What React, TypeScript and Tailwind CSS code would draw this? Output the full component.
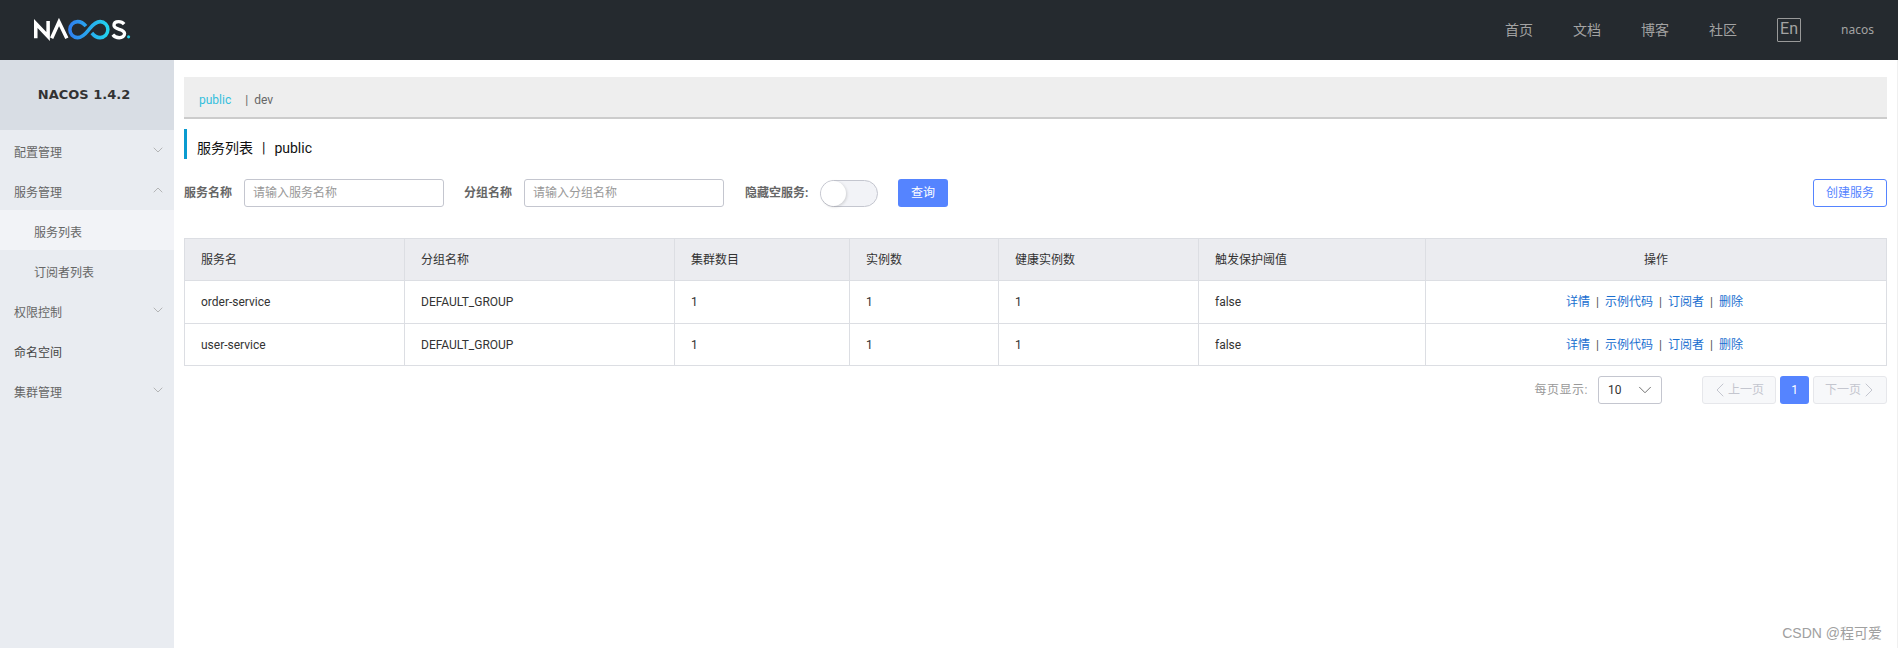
import React from "react";
import { ChevronDown, ChevronUp, ChevronLeft, ChevronRight } from "lucide-react";

const font = 'Roboto, "Noto Sans CJK SC", sans-serif';

function Logo() {
  return (
    <svg width="98" height="24" viewBox="0 0 100 24" preserveAspectRatio="none" className="block" aria-label="NACOS logo">
      <defs>
        <linearGradient id="inf" x1="0" x2="1" y1="0" y2="0">
          <stop offset="0" stopColor="#2f80f0" />
          <stop offset="1" stopColor="#22d3ee" />
        </linearGradient>
      </defs>
      <g fill="none" stroke="#fff" strokeWidth="3.6">
        <path d="M1.8 20.2V5.5L14.4 18.5V3" />
        <path d="M18 20.2L25.5 4L33.5 20.2" />
      </g>
      <path
        d="M53 8.2C50 4.5 47 3.6 44.5 3.6C40 3.6 36.6 7.2 36.6 11.6C36.6 16 40 19.6 44.5 19.6C50 19.6 54 14 56 11.6C58 9.2 62 3.6 67.5 3.6C72 3.6 75.4 7.2 75.4 11.6C75.4 16 72 19.6 67.5 19.6C65 19.6 62 18.7 59 15"
        fill="none"
        stroke="url(#inf)"
        strokeWidth="3.6"
      />
      <path
        d="M92 6.2C90.5 4.4 88.6 3.6 86.4 3.6C83.6 3.6 81.6 5 81.6 7.3C81.6 12.4 92.4 10.2 92.4 15.6C92.4 18.2 90 19.7 87 19.7C84.4 19.7 82 18.7 80.4 16.6"
        fill="none"
        stroke="#fff"
        strokeWidth="3.4"
      />
      <circle cx="96.5" cy="18.8" r="1.6" fill="#22d3ee" />
    </svg>
  );
}

function MenuItem({ label, icon, dark }: { label: string; icon?: "down" | "up"; dark?: boolean }) {
  return (
    <div className={`flex h-10 items-center justify-between pl-[14px] pr-[8px] text-xs ${dark ? "text-[#444]" : "text-[#666]"}`}>
      <span className="pt-[6px]">{label}</span>
      {icon === "down" && <ChevronDown size={16} strokeWidth={1} className="text-[#999]" />}
      {icon === "up" && <ChevronUp size={16} strokeWidth={1} className="text-[#999]" />}
    </div>
  );
}

const heads = ["服务名", "分组名称", "集群数目", "实例数", "健康实例数", "触发保护阈值"];
const rows = [
  { name: "order-service", h: "h-[43px]" },
  { name: "user-service", h: "h-[42px]" },
];

function Actions() {
  return (
    <div className="flex items-center justify-center pr-[3px] text-[#1a6fd0]">
      <span>详情</span>
      <span className="mx-[6px] text-[#555]">|</span>
      <span>示例代码</span>
      <span className="mx-[6px] text-[#555]">|</span>
      <span>订阅者</span>
      <span className="mx-[6px] text-[#555]">|</span>
      <span>删除</span>
    </div>
  );
}

export default function App() {
  return (
    <div className="relative flex h-[648px] w-[1898px] flex-col overflow-hidden bg-white text-xs text-[#333]" style={{ fontFamily: font }}>
      <header className="flex h-[60px] shrink-0 items-center bg-[#252a2f] pl-[34px] pr-6">
        <Logo />
        <nav className="ml-auto flex items-center text-[14px] text-[#a3a3a3]">
          <span className="mr-[40px]">首页</span>
          <span className="mr-[40px]">文档</span>
          <span className="mr-[40px]">博客</span>
          <span className="mr-[40px]">社区</span>
          <span className="mr-[40px] flex h-6 w-6 items-center justify-center rounded-[1px] border border-[#999] pb-[2px] text-[16px]">En</span>
          <span className="text-xs" style={{ fontFamily: '"Noto Sans", sans-serif' }}>nacos</span>
        </nav>
      </header>

      <div className="flex min-h-0 flex-1 border-r border-[#f0f0f0]">
        <aside className="w-[174px] shrink-0 bg-[#e9ecf1]">
          <div className="flex h-[70px] items-center justify-center bg-[#d8dde4] pr-[6px] text-[13px] font-bold text-[#333]" style={{ fontFamily: '"DejaVu Sans", sans-serif' }}>NACOS 1.4.2</div>
          <MenuItem label="配置管理" icon="down" />
          <MenuItem label="服务管理" icon="up" />
          <div className="flex h-10 items-center bg-[#f2f3f7] pl-[34px] pt-[6px] text-[#666]">服务列表</div>
          <div className="flex h-10 items-center pl-[34px] pt-[6px] text-[#666]">订阅者列表</div>
          <MenuItem label="权限控制" icon="down" />
          <MenuItem label="命名空间" dark />
          <MenuItem label="集群管理" icon="down" />
        </aside>

        <main className="min-w-0 flex-1 pl-[10px] pr-[10px] pt-[17px]">
          <div className="flex h-[42px] items-center border-b-2 border-[#ccc] bg-[#eee] pl-[15px] pt-[6px]">
            <span className="text-[#33bfdd]">public</span>
            <span className="ml-[14px] text-[#666]">|</span>
            <span className="ml-[6px] text-[#666]">dev</span>
          </div>

          <div className="mt-[10px] flex h-[30px] items-center border-l-[3px] border-[#0a9bd0] pl-[10px] pt-[8px] text-[14px] text-[#111]">
            <span>服务列表</span>
            <span className="mx-[9px]">|</span>
            <span>public</span>
          </div>

          <div className="mt-5 flex h-7 items-center">
            <span className="w-[60px] font-bold text-[#666]">服务名称</span>
            <div className="flex h-7 w-[200px] items-center rounded-[3px] border border-[#c4c6cf] pl-2 text-[#999]">请输入服务名称</div>
            <span className="ml-5 w-[60px] font-bold text-[#666]">分组名称</span>
            <div className="flex h-7 w-[200px] items-center rounded-[3px] border border-[#c4c6cf] pl-2 text-[#999]">请输入分组名称</div>
            <span className="ml-[21px] w-[75px] font-bold text-[#666]">隐藏空服务:</span>
            <div className="flex h-[27px] w-[58px] items-center rounded-full border border-[#c4c6cf] bg-[#f2f3f7]">
              <div className="h-[25px] w-[25px] rounded-full bg-white shadow-[1px_1px_3px_rgba(0,0,0,0.15)]" />
            </div>
            <button className="ml-5 flex h-7 w-[50px] items-center justify-center rounded-[3px] bg-[#5584ff] text-white">查询</button>
            <button className="ml-auto flex h-7 w-[74px] items-center justify-center rounded-[3px] border border-[#5584ff] bg-white text-[#5584ff]">创建服务</button>
          </div>

          <table className="mt-[31px] w-full table-fixed border-collapse border border-[#dcdee3]">
            <colgroup>
              <col className="w-[220px]" />
              <col className="w-[270px]" />
              <col className="w-[175px]" />
              <col className="w-[149px]" />
              <col className="w-[200px]" />
              <col className="w-[227px]" />
              <col />
            </colgroup>
            <thead>
              <tr className="h-[42px] bg-[#ebecf0]">
                {heads.map((h) => (
                  <th key={h} className="border border-[#dcdee3] pl-4 text-left font-normal text-[#333]">{h}</th>
                ))}
                <th className="border border-[#dcdee3] text-center font-normal text-[#333]">操作</th>
              </tr>
            </thead>
            <tbody>
              {rows.map((r) => (
                <tr key={r.name} className={r.h}>
                  <td className="border border-[#dcdee3] pl-4">{r.name}</td>
                  <td className="border border-[#dcdee3] pl-4">DEFAULT_GROUP</td>
                  <td className="border border-[#dcdee3] pl-4">1</td>
                  <td className="border border-[#dcdee3] pl-4">1</td>
                  <td className="border border-[#dcdee3] pl-4">1</td>
                  <td className="border border-[#dcdee3] pl-4">false</td>
                  <td className="border border-[#dcdee3]"><Actions /></td>
                </tr>
              ))}
            </tbody>
          </table>

          <div className="mt-[10px] flex h-7 items-center justify-end">
            <span className="mr-[10px] tracking-[0.5px] text-[#999]">每页显示:</span>
            <div className="mr-10 flex h-7 w-16 items-center justify-between rounded-[3px] border border-[#c4c6cf] pl-[9px] pr-[5px] text-[#333]">
              <span>10</span>
              <ChevronDown size={22} strokeWidth={1} className="text-[#666]" />
            </div>
            <div className="flex h-7 w-[74px] items-center justify-center rounded-[3px] border border-[#e6e7eb] bg-[#f7f8fa] text-[#c4c6cf]">
              <ChevronLeft size={24} strokeWidth={1} className="-ml-[6px] -mr-[4px]" />上一页
            </div>
            <div className="ml-1 flex h-7 w-[29px] items-center justify-center rounded-[3px] bg-[#5584ff] text-white">1</div>
            <div className="ml-1 flex h-7 w-[74px] items-center justify-center rounded-[3px] border border-[#e6e7eb] bg-[#f7f8fa] text-[#c4c6cf]">
              下一页<ChevronRight size={24} strokeWidth={1} className="-ml-[4px] -mr-[6px]" />
            </div>
          </div>
        </main>
      </div>

      <div className="absolute bottom-[5px] right-[16px] text-[14px] text-[#a0a0a0]" style={{ fontFamily: '"Liberation Sans", "Noto Sans CJK SC", sans-serif' }}>CSDN @程可爱</div>
    </div>
  );
}
